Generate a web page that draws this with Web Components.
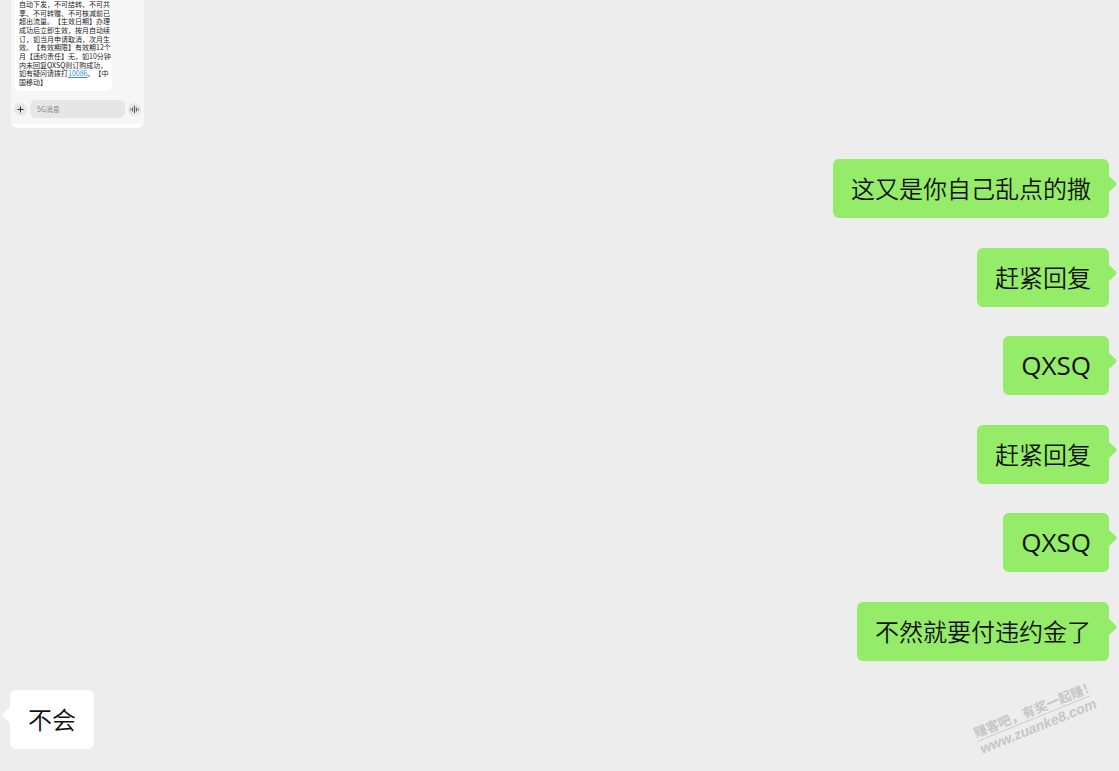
<!DOCTYPE html>
<html lang="zh-CN">
<head>
<meta charset="utf-8">
<title>聊天记录</title>
<style>
  body { margin: 0; background: #ededed; color: #111; font-family: "Noto Sans", "Noto Sans CJK SC", sans-serif; text-spacing-trim: space-all; }
</style>
</head>
<body>
<chat-log>
  <sms-shot slot="media"></sms-shot>
  <chat-bubble side="me">这又是你自己乱点的撒</chat-bubble>
  <chat-bubble side="me">赶紧回复</chat-bubble>
  <chat-bubble side="me" latin>QXSQ</chat-bubble>
  <chat-bubble side="me">赶紧回复</chat-bubble>
  <chat-bubble side="me" latin>QXSQ</chat-bubble>
  <chat-bubble side="me">不然就要付违约金了</chat-bubble>
  <chat-bubble side="peer">不会</chat-bubble>
  <site-mark slot="mark"></site-mark>
</chat-log>
<script>
class Base extends HTMLElement {
  constructor() {
    super();
    this.attachShadow({ mode: "open" }).innerHTML = this.constructor.markup;
  }
}

customElements.define("chat-log", class extends Base {
  static markup = `
    <style>
      :host { display: flex; flex-direction: column; gap: 31px; min-height: 100vh; box-sizing: border-box; padding: 0 10px 22px; position: relative; overflow: hidden; }
      main { flex: 1; display: flex; flex-direction: column; justify-content: space-between; }
    </style>
    <slot name="media"></slot>
    <main><slot></slot></main>
    <slot name="mark"></slot>`;
});

customElements.define("chat-bubble", class extends Base {
  static markup = `
    <style>
      :host { display: block; position: relative; box-sizing: border-box; padding: 12px 18px 11px; border-radius: 6px; font-size: 24px; line-height: 36px; font-weight: 350; white-space: nowrap; }
      :host([side="me"]) { align-self: flex-end; background: #95ec69; color: #111; }
      :host([side="peer"]) { align-self: flex-start; background: #fff; }
      :host([latin]) { padding: 11px 18px 12px; font-family: "Open Sans", sans-serif; font-size: 26px; font-weight: 400; }
      svg { position: absolute; top: 17px; width: 8px; height: 16px; }
      :host([side="me"]) svg { left: 100%; fill: #95ec69; }
      :host([side="peer"]) svg { right: 100%; fill: #fff; transform: scaleX(-1); }
    </style>
    <slot></slot>
    <svg viewBox="0 0 8 16" aria-hidden="true"><path d="M0 0 L7 6.6 Q8 8 7 9.4 L0 16Z"/></svg>`;
});

customElements.define("sms-shot", class extends Base {
  static markup = `
    <style>
      :host { display: flex; flex-direction: column; align-self: flex-start; box-sizing: border-box; width: 133px; height: 128px; margin-left: 1px; padding: 0 3px; background: linear-gradient(#f6f6f6 124px, #fdfdfd 124px); border-radius: 0 0 7px 7px; overflow: hidden; }
      article { display: flex; flex-direction: column; justify-content: space-between; box-sizing: border-box; width: 98px; height: 91px; padding: 0 0 5px 5px; background: #fff; border-radius: 0 0 5px 5px; font: 7px/8px "Noto Sans CJK SC", sans-serif; color: #222; white-space: nowrap; }
      a { color: #3a8fce; }
      form { display: flex; align-items: center; gap: 3px; margin-top: 9px; }
      input { flex: 1; min-width: 0; height: 18px; box-sizing: border-box; border: 0; border-radius: 6px; padding: 0 7px; background: #e6e6e6; font: 7px/8px "Noto Sans CJK SC", sans-serif; }
      input::placeholder { color: #888; opacity: 1; }
      button { flex: none; width: 13px; height: 13px; padding: 0; border: 0; border-radius: 50%; background: #e7e7e7; }
      svg { display: block; width: 13px; height: 13px; fill: none; stroke: #333; }
    </style>
    <article>
      <div>自动下发，不可结转、不可共</div>
      <div>享、不可转赠、不可核减前已</div>
      <div>超出流量。【生效日期】办理</div>
      <div>成功后立即生效，按月自动续</div>
      <div>订，如当月申请取消，次月生</div>
      <div>效。【有效期限】有效期12个</div>
      <div>月【违约责任】无，如10分钟</div>
      <div>内未回复QXSQ则订购成功，</div>
      <div>如有疑问请拨打<a href="tel:10086">10086</a>。【中</div>
      <div>国移动】</div>
    </article>
    <form>
      <button type="button" aria-label="更多"><svg viewBox="0 0 13 13"><path d="M6.5 3.5v6M3.5 6.5h6"/></svg></button>
      <input type="text" placeholder="5G消息" aria-label="5G消息">
      <button type="button" aria-label="语音"><svg viewBox="0 0 13 13"><path stroke-width=".8" d="M2.8 5.5v2M4.6 4.5v4M6.5 2.8v7.4M8.4 4.5v4M10.2 5.5v2"/></svg></button>
    </form>`;
});

customElements.define("site-mark", class extends Base {
  static markup = `
    <style>
      :host { position: absolute; right: 24px; bottom: 36px; width: 122px; transform: rotate(-22deg); color: #c6c6c6; font-weight: 700; white-space: nowrap; pointer-events: none; }
      .slogan { font-size: 13px; line-height: 16px; border-bottom: 1px solid #cacaca; }
      .site { font: italic 700 14px/16px "Liberation Sans", sans-serif; }
    </style>
    <div class="slogan">赚客吧，有奖一起赚！</div>
    <div class="site">www.zuanke8.com</div>`;
});
</script>
</body>
</html>
